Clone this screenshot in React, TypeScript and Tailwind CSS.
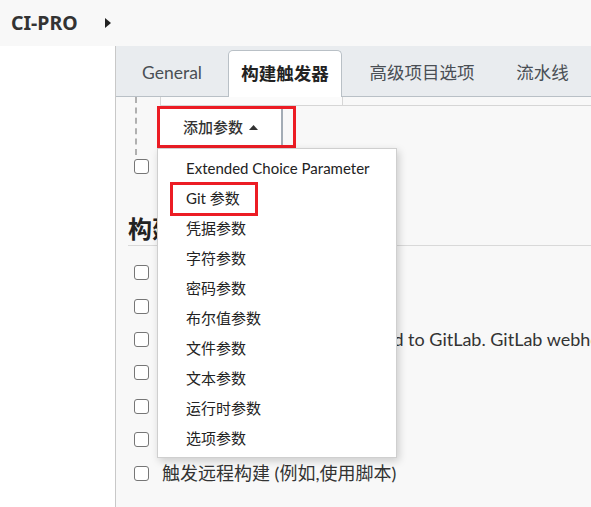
import React from "react";

const menuItems = [
  "Extended Choice Parameter",
  "Git 参数",
  "凭据参数",
  "字符参数",
  "密码参数",
  "布尔值参数",
  "文件参数",
  "文本参数",
  "运行时参数",
  "选项参数",
];

const triggers = [
  "其他工程构建后触发",
  "定时构建",
  "Build when a change is pushed to GitLab. GitLab webhook URL: http://jenkins/project/CI-PRO",
  "Gitee webhook 触发构建",
  "轮询 SCM",
  "Generic Webhook",
  "触发远程构建 (例如,使用脚本)",
];

const tabs = [
  { label: "General", w: "w-[86px]" },
  { label: "构建触发器", w: "w-[114px]", active: true },
  { label: "高级项目选项", w: "w-[134px]" },
  { label: "流水线", w: "w-[81px]" },
];

function Checkbox() {
  return <span className="block h-[15px] w-[15px] shrink-0 rounded-[3px] border border-[#767676] bg-white" />;
}

export default function App() {
  return (
    <div
      className="h-[507px] w-[591px] overflow-hidden bg-white text-[#333]"
      style={{ fontFamily: 'Lato,"Noto Sans CJK SC",sans-serif' }}
    >
      {/* top bar */}
      <div className="flex h-[46px] items-center bg-[#f8f8f8] pl-[11px]">
        <span
          className="text-[19.5px] font-bold text-[#333]"
          style={{ fontFamily: '"Noto Sans",sans-serif' }}
        >
          CI-PRO
        </span>
        <svg className="ml-[27px]" width="6" height="10" viewBox="0 0 6 10">
          <polygon points="0,0 6,5 0,10" fill="#222" />
        </svg>
      </div>

      <div className="flex h-[461px]">
        <div className="w-[115px] shrink-0 bg-white" />
        <div className="flex flex-1 flex-col border-l border-[#c8c8c8] bg-[#f8f8f8]">
          {/* tabs */}
          <div className="flex h-[51px] shrink-0 items-end gap-[13px] border-b border-[#b9c0c6] bg-[#e9ecef] pl-[13px]">
            {tabs.map((t) =>
              t.active ? (
                <div
                  key={t.label}
                  className={`${t.w} -mb-px flex h-[47px] items-center justify-center rounded-t-[5px] border border-b-0 border-[#b9c0c6] bg-white text-[17.5px] font-bold text-[#222]`}
                >
                  {t.label}
                </div>
              ) : (
                <div key={t.label} className={`${t.w} flex h-[46px] items-center justify-center text-[17.5px] text-[#4a4f55]`}>
                  {t.label}
                </div>
              )
            )}
          </div>

          {/* content */}
          <div className="relative flex-1">
            <div className="ml-[19px] w-[calc(100%-19px)] border-l-2 border-dashed border-[#b0b0b0] pb-[7px]">
              <div className="ml-[23px] flex h-[9px] border-b border-[#d6d6d6]">
                <div className="w-[183px] border-x border-[#d6d6d6] bg-[#fbfbfb]" />
              </div>
              <div className="relative ml-[20px] w-[139px]">
                <div className="h-[42px] border-[3px] border-[#ec1c24] pr-[10px]">
                  <div className="flex h-full items-center justify-center gap-[6px] border-r-2 border-[#a3acb5] bg-white text-[15px] font-medium text-[#333]">
                    添加参数
                    <svg width="9" height="5" viewBox="0 0 9 5">
                      <polygon points="0,5 4.5,0 9,5" fill="#333" />
                    </svg>
                  </div>
                </div>

                {/* dropdown */}
                <div className="absolute left-0 top-full z-10 w-[240px] border border-[#cfcfcf] bg-white py-[4px] shadow-[2px_3px_8px_rgba(0,0,0,0.18)]">
                  {menuItems.map((m) => (
                    <div key={m} className="flex h-[30px] items-center pl-[28px] text-[15px] text-[#222]">
                      {m}
                    </div>
                  ))}
                  <div className="absolute left-[12px] top-[33px] h-[34px] w-[88px] border-[3px] border-[#ec1c24]" />
                </div>
              </div>
            </div>

            <div className="flex h-[22px] items-center pl-[18px]">
              <Checkbox />
              <span className="ml-[13px] text-[17px]">参数化构建过程</span>
            </div>

            <div className="ml-[12px] mt-[36px] flex h-[33px] items-center border-b border-[#d9d9d9] text-[24px] font-bold text-[#222]">
              构建触发器
            </div>

            <div className="mt-[10px] flex flex-col">
              {triggers.map((t) => (
                <div key={t} className="flex h-[33.4px] items-center whitespace-nowrap pl-[18px]">
                  <Checkbox />
                  <span className="ml-[13px] text-[18px] text-[#333]">{t}</span>
                </div>
              ))}
            </div>
          </div>
        </div>
      </div>
    </div>
  );
}
